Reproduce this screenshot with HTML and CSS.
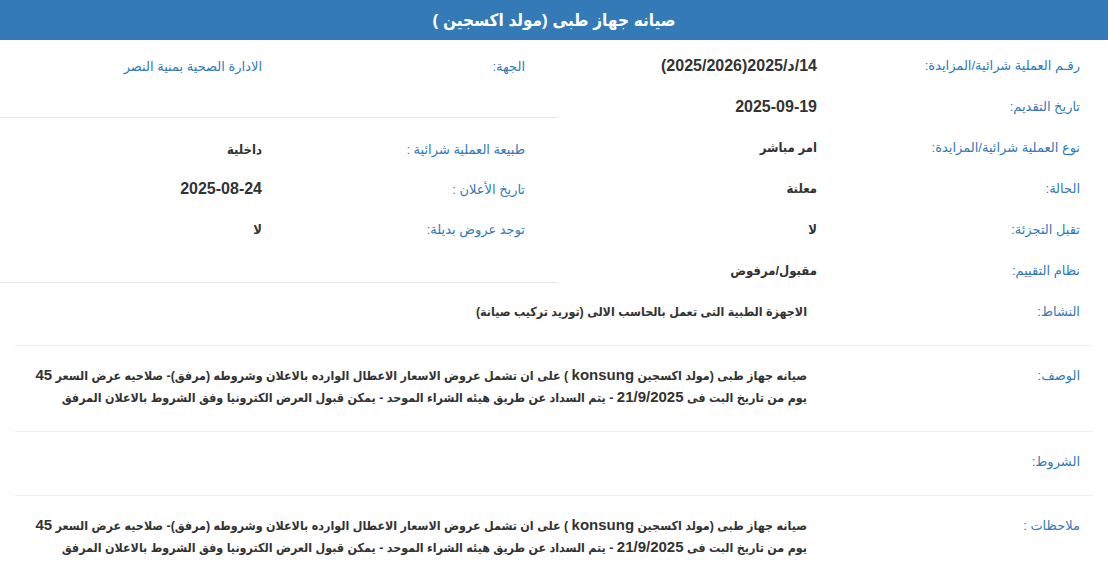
FILE: index.html
```html
<!DOCTYPE html>
<html lang="ar" dir="rtl">
<head>
<meta charset="utf-8">
<title>صيانه جهاز طبى (مولد اكسجين )</title>
<link rel="stylesheet" href="styles.css">
</head>
<body>
<div class="page">
  <header class="title">صيانه جهاز طبى (مولد اكسجين )</header>
  <section class="top">
    <div class="col col-r">
      <div class="row"><div class="lbl">رقـم العملية شرائية/المزايدة:</div><div class="val num">14/د/2025(2025/2026)</div></div>
      <div class="row"><div class="lbl">تاريخ التقديم:</div><div class="val num">2025-09-19</div></div>
      <div class="row"><div class="lbl">نوع العملية شرائية/المزايدة:</div><div class="val">امر مباشر</div></div>
      <div class="row"><div class="lbl">الحالة:</div><div class="val">معلنة</div></div>
      <div class="row"><div class="lbl">تقبل التجزئة:</div><div class="val">لا</div></div>
      <div class="row"><div class="lbl">نظام التقييم:</div><div class="val">مقبول/مرفوض</div></div>
    </div>
    <div class="col col-l">
      <div class="group group-1">
        <div class="row"><div class="lbl">الجهة:</div><div class="val val-plain">الادارة الصحية بمنية النصر</div></div>
      </div>
      <div class="group group-2">
        <div class="row row-s"><div class="lbl">طبيعة العملية شرائية :</div><div class="val">داخلية</div></div>
        <div class="row row-s"><div class="lbl">تاريخ الأعلان :</div><div class="val num">2025-08-24</div></div>
        <div class="row row-s"><div class="lbl">توجد عروض بديلة:</div><div class="val">لا</div></div>
      </div>
    </div>
  </section>
  <section class="details">
    <div class="drow drow-first"><div class="dlbl">النشاط:</div><div class="dval">الاجهزة الطبية التى تعمل بالحاسب الالى (توريد تركيب صيانة)</div></div>
    <div class="drow"><div class="dlbl">الوصف:</div><div class="dval">صيانه جهاز طبى (مولد اكسجين <span class="lat">konsung</span> ) على ان تشمل عروض الاسعار الاعطال الوارده بالاعلان وشروطه (مرفق)- صلاحيه عرض السعر <span class="lat">45</span> يوم من تاريخ البت فى <span class="lat">21/9/2025</span> - يتم السداد عن طريق هيئه الشراء الموحد - يمكن قبول العرض الكترونيا وفق الشروط بالاعلان المرفق</div></div>
    <div class="drow"><div class="dlbl">الشروط:</div><div class="dval"></div></div>
    <div class="drow drow-last"><div class="dlbl">ملاحظات :</div><div class="dval">صيانه جهاز طبى (مولد اكسجين <span class="lat">konsung</span> ) على ان تشمل عروض الاسعار الاعطال الوارده بالاعلان وشروطه (مرفق)- صلاحيه عرض السعر <span class="lat">45</span> يوم من تاريخ البت فى <span class="lat">21/9/2025</span> - يتم السداد عن طريق هيئه الشراء الموحد - يمكن قبول العرض الكترونيا وفق الشروط بالاعلان المرفق</div></div>
  </section>
</div>
</body>
</html>
```

FILE: styles.css
```css
html, body {
  margin: 0;
  padding: 0;
  background: #fff;
}
body {
  font-family: "Liberation Sans", "DejaVu Sans Condensed", "DejaVu Sans", sans-serif;
  color: #333;
  font-size: 13px;
}
.page {
  direction: rtl;
  width: 1108px;
}
.title {
  height: 40px;
  background: #337ab7;
  color: #fff;
  font-weight: bold;
  font-size: 17px;
  font-stretch: condensed;
  display: flex;
  align-items: center;
  justify-content: center;
}
.top {
  display: flex;
  align-items: flex-start;
}
.col {
  box-sizing: border-box;
}
.col-r {
  flex: 0 0 550px;
  padding: 5px 28px 0 0;
}
.col-l {
  flex: 0 0 558px;
}
.group {
  border-bottom: 1px solid #e6e6e6;
}
.group-1 {
  padding: 6px 33px 30px 0;
}
.group-2 {
  padding: 11px 33px 33px 0;
}
.row {
  display: flex;
  align-items: center;
  height: 41px;
}
.row-s {
  height: 40px;
}
.lbl,
.dlbl {
  font-family: "Liberation Sans", "DejaVu Sans", sans-serif;
  font-weight: normal;
  color: #337ab7;
  font-size: 13px;
}
.lbl {
  flex: 0 0 263px;
}
.val {
  font-weight: bold;
  font-size: 13px;
  font-stretch: condensed;
  color: #333;
}
.num {
  font-size: 16px;
}
.val.val-plain {
  font-family: "Liberation Sans", "DejaVu Sans", sans-serif;
  font-weight: normal;
  font-stretch: normal;
  color: #337ab7;
  font-size: 13px;
}
.drow {
  display: flex;
  margin: 0 15px;
  padding: 19px 13px 22px 0;
  border-bottom: 1px solid #eee;
  line-height: 22px;
}
.drow-first {
  padding-top: 10px;
}
.drow-last {
  border-bottom: none;
}
.dlbl {
  flex: 0 0 273px;
}
.dval {
  flex: 1;
  padding-left: 15px;
  font-weight: bold;
  font-size: 12.4px;
  font-stretch: condensed;
  color: #333;
}
.lat {
  font-size: 15px;
  line-height: 18px;
}
```
